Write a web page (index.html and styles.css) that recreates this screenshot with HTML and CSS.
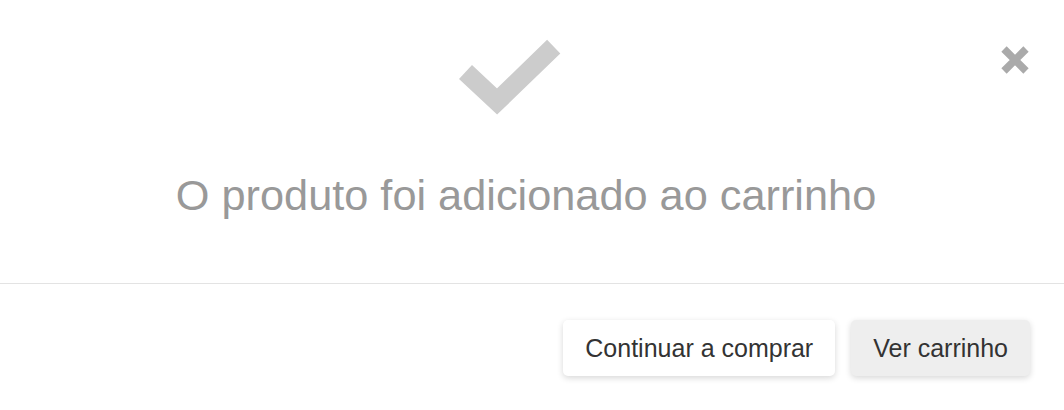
FILE: index.html
```html
<!DOCTYPE html>
<html lang="pt">
<head>
<meta charset="utf-8">
<title>Carrinho</title>
<link rel="stylesheet" href="styles.css">
</head>
<body>
<div class="modal">
  <div class="modal-header">
    <div class="icon-wrap">
      <svg class="check" viewBox="0 0 102 77" width="102" height="77" aria-hidden="true">
        <polyline points="6.5,33 38,62.5 94.7,7.6" fill="none" stroke="#cccccc" stroke-width="19" stroke-linejoin="miter"/>
      </svg>
    </div>
    <h2 class="title">O produto foi adicionado ao carrinho</h2>
    <button class="close" aria-label="Fechar">
      <svg viewBox="0 0 30 30" width="30" height="30" aria-hidden="true">
        <path d="M4 4 L26 26 M26 4 L4 26" stroke="#aaaaaa" stroke-width="7.5" fill="none"/>
      </svg>
    </button>
  </div>
  <div class="modal-footer">
    <button class="btn btn-light">Continuar a comprar</button>
    <button class="btn btn-grey">Ver carrinho</button>
  </div>
</div>
</body>
</html>
```
FILE: styles.css
```css
html, body {
  margin: 0;
  padding: 0;
  background: #ffffff;
}
body {
  font-family: "Liberation Sans", Arial, sans-serif;
}
.modal {
  width: 1064px;
}
.modal-header {
  position: relative;
  padding: 39px 0 62px;
  border-bottom: 1px solid #e3e3e3;
}
.icon-wrap {
  display: flex;
  justify-content: center;
  padding-right: 44px;
}
.check {
  display: block;
}
.title {
  margin: 53px 0 0;
  padding-right: 12px;
  text-align: center;
  font-size: 43.3px;
  line-height: 52px;
  font-weight: normal;
  color: #999999;
}
.close {
  position: absolute;
  top: 45px;
  right: 34px;
  width: 30px;
  height: 30px;
  padding: 0;
  border: 0;
  background: transparent;
}
.close svg {
  display: block;
}
.modal-footer {
  display: flex;
  justify-content: flex-end;
  gap: 16px;
  padding: 36px 34px 34px;
}
.btn {
  height: 56px;
  padding: 0 22px;
  border: 0;
  border-radius: 5px;
  font-family: "Liberation Sans", Arial, sans-serif;
  font-size: 25px;
  color: #333333;
  box-shadow: 0 2px 6px rgba(0, 0, 0, 0.16);
}
.btn-light {
  background: #ffffff;
}
.btn-grey {
  background: #eeeeee;
}
```
